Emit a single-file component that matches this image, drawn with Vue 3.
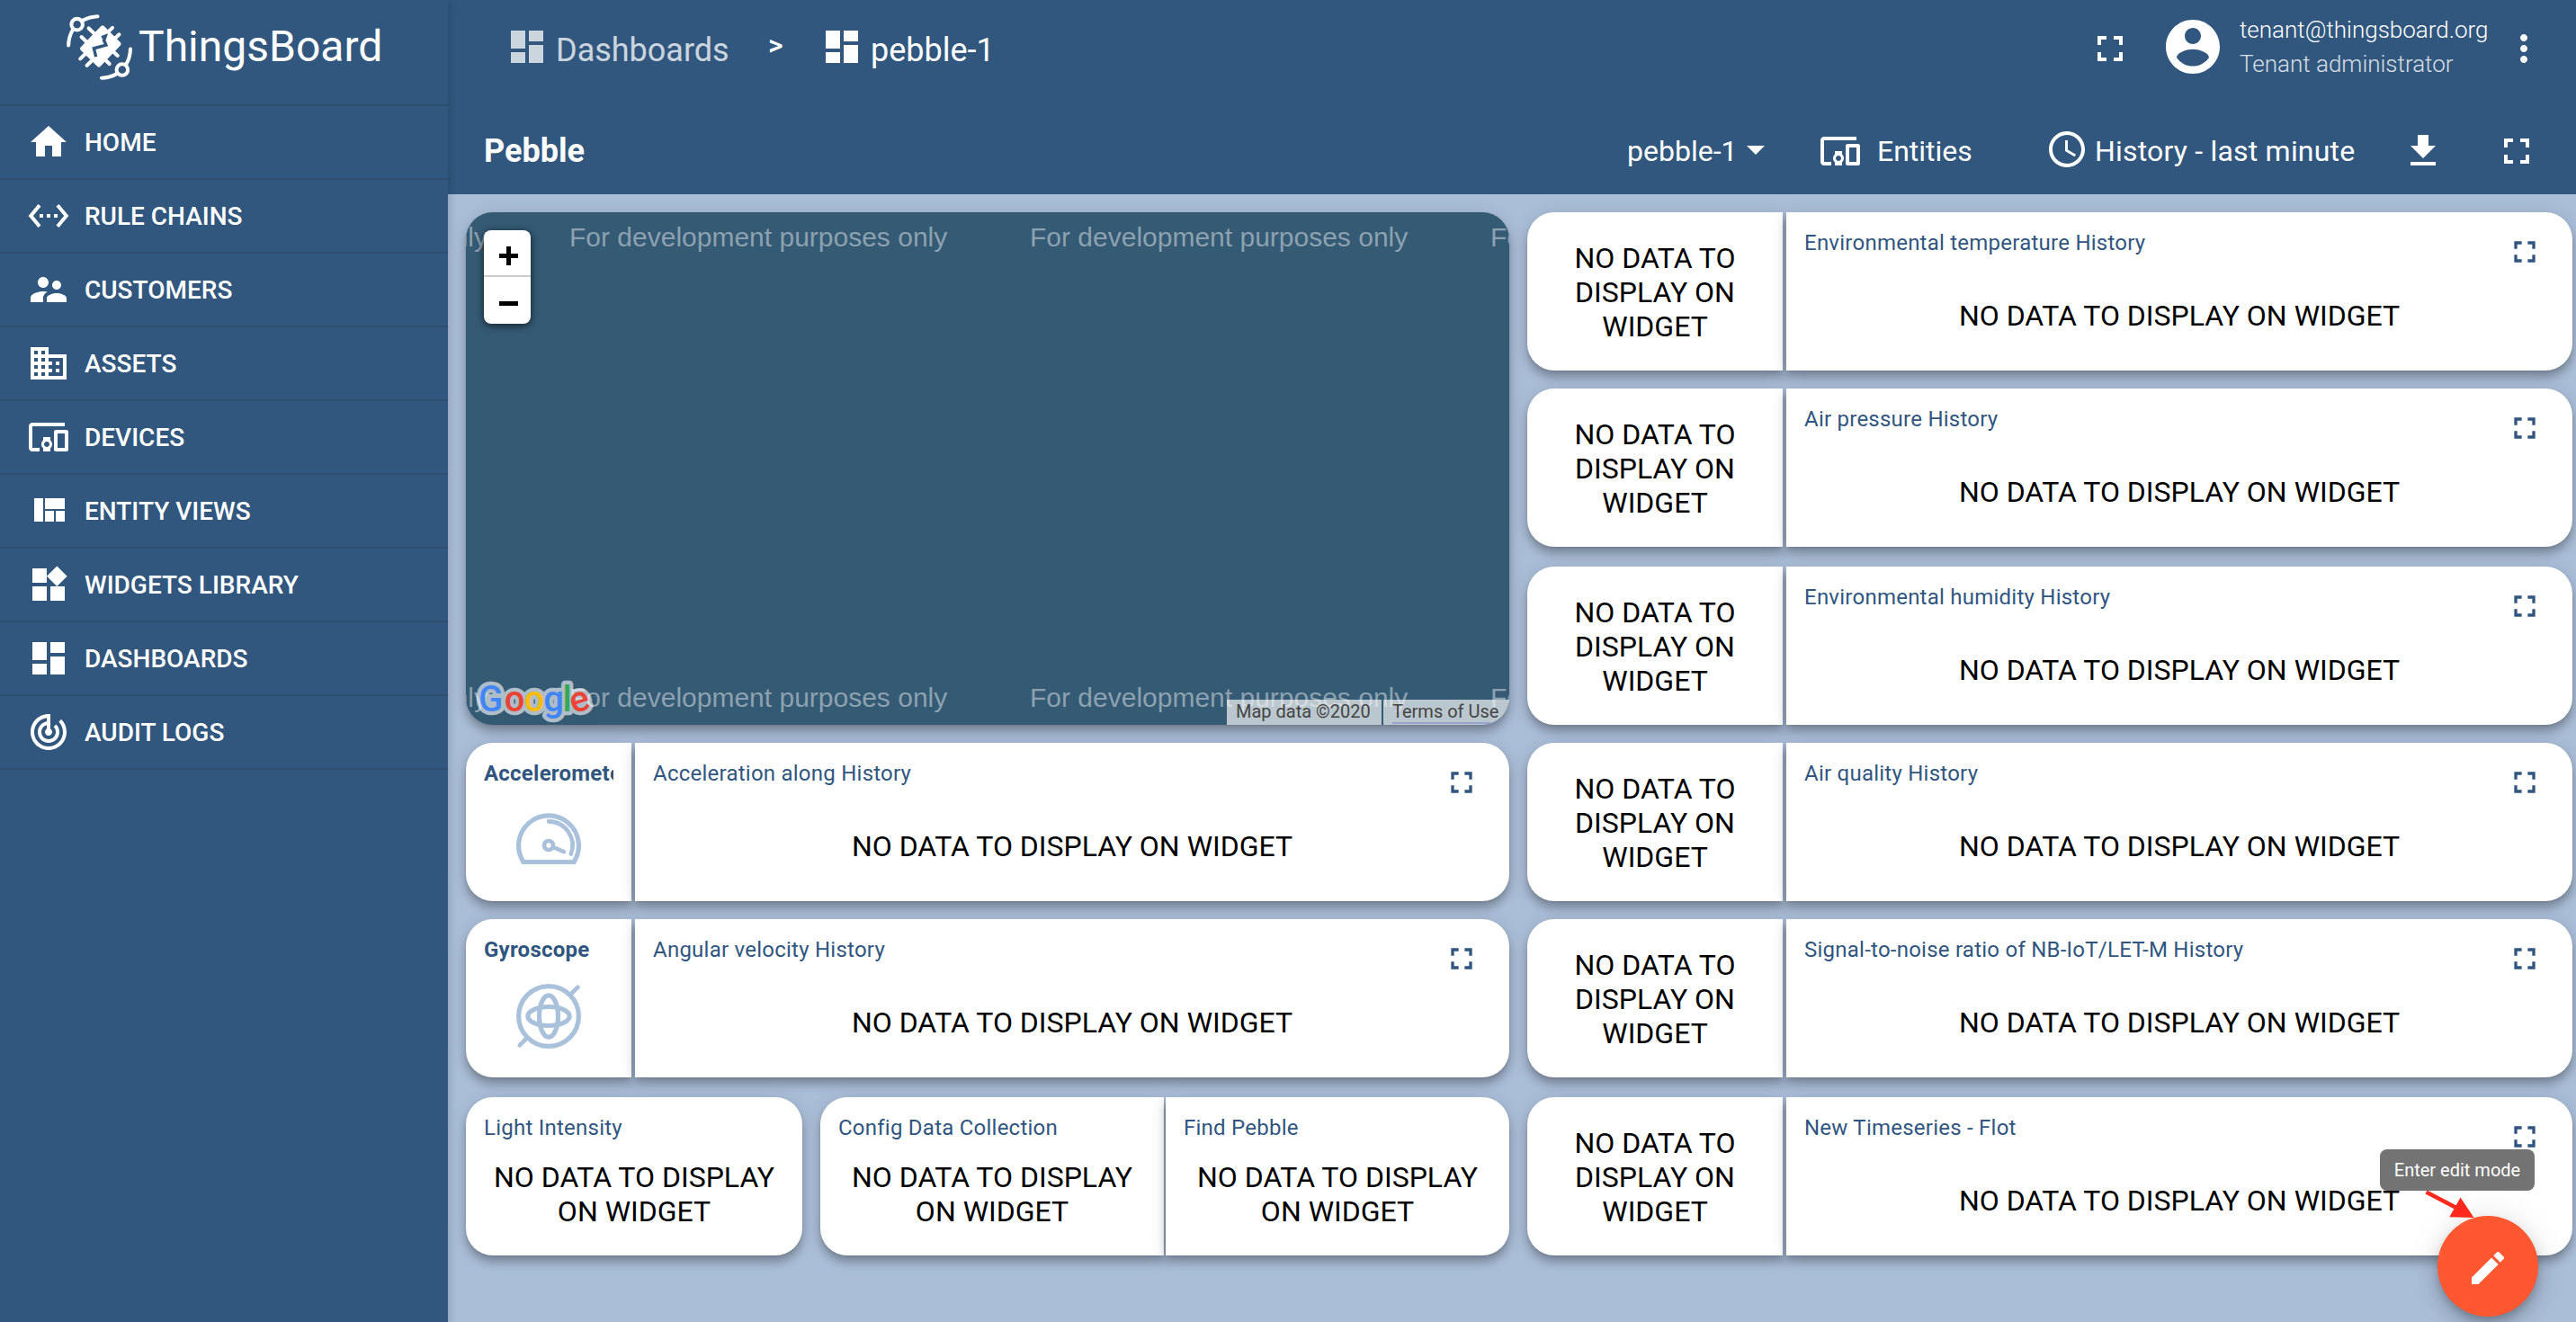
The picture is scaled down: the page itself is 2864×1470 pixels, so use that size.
<script setup>
const icons = {
  home: 'M10 20v-6h4v6h5v-8h3L12 3 2 12h3v8z',
  rules: 'M7.77 6.76L6.23 5.48.82 12l5.41 6.52 1.54-1.28L3.42 12l4.35-5.24zM7 13h2v-2H7v2zm10-2h-2v2h2v-2zm-6 2h2v-2h-2v2zm6.77-7.52l-1.54 1.28L20.58 12l-4.35 5.24 1.54 1.28L23.18 12l-5.41-6.52z',
  customers: 'M16.5 12c1.38 0 2.49-1.12 2.49-2.5S17.88 7 16.5 7C15.12 7 14 8.12 14 9.5s1.12 2.5 2.5 2.5zM9 11c1.66 0 2.99-1.34 2.99-3S10.66 5 9 5C7.34 5 6 6.34 6 8s1.34 3 3 3zm7.5 3c-1.83 0-5.5.92-5.5 2.75V19h11v-2.25c0-1.83-3.67-2.75-5.5-2.75zM9 13c-2.33 0-7 1.17-7 3.5V19h7v-2.25c0-.85.33-2.34 2.37-3.47C10.5 13.1 9.66 13 9 13z',
  assets: 'M12 7V3H2v18h20V7H12zM6 19H4v-2h2v2zm0-4H4v-2h2v2zm0-4H4V9h2v2zm0-4H4V5h2v2zm4 12H8v-2h2v2zm0-4H8v-2h2v2zm0-4H8V9h2v2zm0-4H8V5h2v2zm10 12h-8v-2h2v-2h-2v-2h2v-2h-2V9h8v10zm-2-8h-2v2h2v-2zm0 4h-2v2h2v-2z',
  devices: 'M3 6h18V4H3c-1.1 0-2 .9-2 2v12c0 1.1.9 2 2 2h4v-2H3V6zm10 6H9v1.78c-.61.55-1 1.33-1 2.22s.39 1.67 1 2.22V20h4v-1.78c.61-.55 1-1.34 1-2.22s-.39-1.67-1-2.22V12zm-2 5.5c-.83 0-1.5-.67-1.5-1.5s.67-1.5 1.5-1.5 1.5.67 1.5 1.5-.67 1.5-1.5 1.5zM22 8h-6c-.5 0-1 .5-1 1v10c0 .5.5 1 1 1h6c.5 0 1-.5 1-1V9c0-.5-.5-1-1-1zm-1 10h-4v-8h4v8z',
  views: 'M10 18h5v-6h-5v6zm-6 0h5V5H4v13zm12 0h5v-6h-5v6zM10 5v6h11V5H10z',
  widgets: 'M13 13v8h8v-8h-8zM3 21h8v-8H3v8zM3 3v8h8V3H3zm13.66-1.31L11 7.34 16.66 13l5.66-5.66-5.66-5.65z',
  dashboards: 'M3 13h8V3H3v10zm0 8h8v-6H3v6zm10 0h8V11h-8v10zm0-18v6h8V3h-8z',
  audit: 'M19.07 4.93l-1.41 1.41C19.1 7.79 20 9.79 20 12c0 4.42-3.58 8-8 8s-8-3.58-8-8c0-4.08 3.05-7.44 7-7.93v2.02C8.16 6.57 6 9.03 6 12c0 3.31 2.69 6 6 6s6-2.69 6-6c0-1.66-.67-3.16-1.76-4.24l-1.41 1.41C15.55 9.9 16 10.9 16 12c0 2.21-1.79 4-4 4s-4-1.79-4-4c0-1.86 1.28-3.41 3-3.86v2.14c-.6.35-1 .98-1 1.72 0 1.1.9 2 2 2s2-.9 2-2c0-.74-.4-1.38-1-1.72V2h-1C6.48 2 2 6.48 2 12s4.48 10 10 10 10-4.48 10-10c0-2.76-1.12-5.26-2.93-7.07z',
  fullscreen: 'M7 14H5v5h5v-2H7v-3zm-2-4h2V7h3V5H5v5zm12 7h-3v2h5v-5h-2v3zM14 5v2h3v3h2V5h-5z',
  account: 'M12 2C6.48 2 2 6.48 2 12s4.48 10 10 10 10-4.48 10-10S17.52 2 12 2zm0 3c1.66 0 3 1.34 3 3s-1.34 3-3 3-3-1.34-3-3 1.34-3 3-3zm0 14.2c-2.5 0-4.71-1.28-6-3.22.03-1.99 4-3.08 6-3.08 1.99 0 5.97 1.09 6 3.08-1.29 1.94-3.5 3.22-6 3.22z',
  more: 'M12 8c1.1 0 2-.9 2-2s-.9-2-2-2-2 .9-2 2 .9 2 2 2zm0 2c-1.1 0-2 .9-2 2s.9 2 2 2 2-.9 2-2-.9-2-2-2zm0 6c-1.1 0-2 .9-2 2s.9 2 2 2 2-.9 2-2-.9-2-2-2z',
  clock: 'M11.99 2C6.47 2 2 6.48 2 12s4.47 10 9.99 10C17.52 22 22 17.52 22 12S17.52 2 11.99 2zM12 20c-4.42 0-8-3.58-8-8s3.58-8 8-8 8 3.58 8 8-3.58 8-8 8zm.5-13H11v6l5.25 3.15.75-1.23-4.5-2.67z',
  download: 'M19 9h-4V3H9v6H5l7 7 7-7zM5 18v2h14v-2H5z',
  edit: 'M3 17.25V21h3.75L17.81 9.94l-3.75-3.75L3 17.25zM20.71 7.04c.39-.39.39-1.02 0-1.41l-2.34-2.34c-.39-.39-1.02-.39-1.41 0l-1.83 1.83 3.75 3.75 1.83-1.83z',
}

const nav = [
  ['home', 'HOME'],
  ['rules', 'RULE CHAINS'],
  ['customers', 'CUSTOMERS'],
  ['assets', 'ASSETS'],
  ['devices', 'DEVICES'],
  ['views', 'ENTITY VIEWS'],
  ['widgets', 'WIDGETS LIBRARY'],
  ['dashboards', 'DASHBOARDS'],
  ['audit', 'AUDIT LOGS'],
]

const history = [
  'Environmental temperature History',
  'Air pressure History',
  'Environmental humidity History',
  'Air quality History',
  'Signal-to-noise ratio of NB-IoT/LET-M History',
  'New Timeseries - Flot',
]

const google = [
  ['G', 20.5, '#4285f4', 0],
  ['o', 47, '#ea4335', 0],
  ['o', 69, '#fbbc05', 0],
  ['g', 90.5, '#4285f4', 0],
  ['l', 105.5, '#34a853', 0],
  ['e', 119.5, '#ea4335', -18],
]

const noData = 'NO DATA TO DISPLAY ON WIDGET'
</script>

<template>
  <div class="app">
    <aside class="sidebar">
      <div class="brand">
        <svg class="emblem" viewBox="0 0 72 72" fill="none" stroke="#fff" stroke-linecap="round">
          <g stroke-width="4">
            <circle cx="11.5" cy="11" r="6.2" />
            <circle cx="61" cy="60.7" r="6.2" />
            <path d="M34 2.2Q25.5 2.6 18 6.5M6.8 17Q2.3 24.500 2.100 34M38.500 69.700Q47 69.500 54.500 65.500M70 38Q69.800 47 65.500 54.500" />
            <path d="M24.300 15.300L56 45.300M16.300 24.700L47 54.300M50.300 14.700L15 48.700M57.700 22L22.300 56" />
          </g>
          <path d="M39.500 14.500L57.500 32.500L35.500 55.500L17 37.500Z" fill="#fff" stroke-width="4.500" stroke-linejoin="round" />
          <path d="M38.500 25.200L42.700 23.800L41 28.500L43.300 33.600L30 37.300L32.200 46.500" stroke="#31577e" stroke-width="3.400" stroke-linecap="butt" />
        </svg>
        <span class="brand-name">ThingsBoard</span>
      </div>
      <nav>
        <a v-for="[icon, label] in nav" :key="label" class="nav-item">
          <svg class="icon" viewBox="0 0 24 24"><path :d="icons[icon]" /></svg>
          <span>{{ label }}</span>
        </a>
      </nav>
    </aside>

    <main class="main">
      <header class="topbar">
        <div class="crumbs">
          <svg class="icon dim" viewBox="0 0 24 24"><path :d="icons.dashboards" /></svg>
          <span class="crumb dim first">Dashboards</span>
          <span class="sep">&gt;</span>
          <svg class="icon" viewBox="0 0 24 24"><path :d="icons.dashboards" /></svg>
          <span class="crumb">pebble-1</span>
        </div>
        <div class="user">
          <svg class="icon" viewBox="0 0 24 24"><path :d="icons.fullscreen" /></svg>
          <svg class="avatar" viewBox="0 0 24 24"><path :d="icons.account" /></svg>
          <div class="user-info">
            <span>tenant@thingsboard.org</span>
            <span class="role">Tenant administrator</span>
          </div>
          <svg class="icon" viewBox="0 0 24 24"><path :d="icons.more" /></svg>
        </div>
      </header>

      <div class="toolbar">
        <h1>Pebble</h1>
        <div class="tools">
          <span class="state">pebble-1</span>
          <i class="caret"></i>
          <svg class="icon entities" viewBox="0 0 24 24"><path :d="icons.devices" /></svg>
          <span class="entities-label">Entities</span>
          <svg class="icon clock" viewBox="0 0 24 24"><path :d="icons.clock" /></svg>
          <span class="window">History - last minute</span>
          <svg class="icon download" viewBox="0 0 24 24"><path :d="icons.download" /></svg>
          <svg class="icon" viewBox="0 0 24 24"><path :d="icons.fullscreen" /></svg>
        </div>
      </div>

      <section class="dashboard">
        <div class="col left">
          <div class="card map">
            <span class="mark m1">only</span>
            <span class="mark m2">For development purposes only</span>
            <span class="mark m3">For development purposes only</span>
            <span class="mark m4">For development purposes only</span>
            <span class="mark low m1">only</span>
            <span class="mark low m2">For development purposes only</span>
            <span class="mark low m3">For development purposes only</span>
            <span class="mark low m4">For development purposes only</span>
            <div class="zoom">
              <div class="zoom-btn"><i class="bar"></i><i class="bar up"></i></div>
              <div class="zoom-btn"><i class="bar"></i></div>
            </div>
            <svg class="google" viewBox="0 0 140 60" text-anchor="middle">
              <g opacity="0.6" fill="#fff" stroke="#fff" stroke-width="8.500" stroke-linejoin="round">
                <text v-for="([c, x, , r], i) in google" :key="i" :x="x" y="40" :transform="`rotate(${r} ${x} 30)`">{{ c }}</text>
              </g>
              <text v-for="([c, x, f, r], i) in google" :key="i" :x="x" y="40" :fill="f" :transform="`rotate(${r} ${x} 30)`">{{ c }}</text>
            </svg>
            <div class="credits">
              <span class="credit">Map data ©2020</span>
              <span class="credit"><u>Terms of Use</u></span>
            </div>
          </div>

          <div class="row">
            <div class="card round-l sensor">
              <div class="title bold">Accelerometer</div>
              <svg class="glyph" viewBox="0 0 72 72">
                <path d="M8 60.500A33.400 33.400 0 1 1 64 60.500Z" />
                <path d="M36 15.400A26.600 26.600 0 0 1 60.800 51.500" stroke-width="4.600" />
                <circle cx="36" cy="42" r="5" stroke-width="4.700" />
                <path d="M41 44L53 49.200" stroke-width="4.600" />
              </svg>
            </div>
            <div class="card round-r grow timeseries">
              <div class="title">Acceleration along History</div>
              <div class="empty">{{ noData }}</div>
              <svg class="expand" viewBox="0 0 24 24"><path :d="icons.fullscreen" /></svg>
            </div>
          </div>

          <div class="row">
            <div class="card round-l sensor">
              <div class="title bold">Gyroscope</div>
              <svg class="glyph" viewBox="0 0 72 72">
                <circle cx="36" cy="36" r="33.400" />
                <ellipse cx="36" cy="36" rx="23.200" ry="10.500" />
                <ellipse cx="36" cy="36" rx="10.500" ry="23.200" />
                <path d="M60.500 11.500L68.500 3.700M11.500 60.500L3.700 68.300" stroke-width="4.600" />
              </svg>
            </div>
            <div class="card round-r grow timeseries">
              <div class="title">Angular velocity History</div>
              <div class="empty">{{ noData }}</div>
              <svg class="expand" viewBox="0 0 24 24"><path :d="icons.fullscreen" /></svg>
            </div>
          </div>

          <div class="row last">
            <div class="card light">
              <div class="title">Light Intensity</div>
              <div class="empty">{{ noData }}</div>
            </div>
            <div class="card round-l grow">
              <div class="title">Config Data Collection</div>
              <div class="empty">{{ noData }}</div>
            </div>
            <div class="card round-r grow find">
              <div class="title">Find Pebble</div>
              <div class="empty">{{ noData }}</div>
            </div>
          </div>
        </div>

        <div class="col right">
          <div v-for="name in history" :key="name" class="row">
            <div class="card round-l value">
              <div class="empty">{{ noData }}</div>
            </div>
            <div class="card round-r grow timeseries">
              <div class="title">{{ name }}</div>
              <div class="empty">{{ noData }}</div>
              <svg class="expand" viewBox="0 0 24 24"><path :d="icons.fullscreen" /></svg>
            </div>
          </div>
        </div>
      </section>
    </main>

    <div class="tooltip">Enter edit mode</div>
    <button class="fab">
      <svg class="icon" viewBox="0 0 24 24"><path :d="icons.edit" /></svg>
    </button>
    <svg class="pointer" viewBox="0 0 60 36">
      <path d="M1.500 2.500L34 19.500" stroke="#fd2a1b" stroke-width="4.600" />
      <path d="M39.500 8.500L27.300 30.200L54.500 31Z" fill="#fd2a1b" />
    </svg>
  </div>
</template>

<style>
body {
  margin: 0;
  overflow: hidden;
}
</style>

<style scoped>
.app {
  position: relative;
  display: flex;
  width: 2864px;
  height: 1470px;
  overflow: hidden;
  font-family: Roboto, "Liberation Sans", sans-serif;
  color: #fff;
  background: #abbed8;
}
.icon {
  width: 48px;
  height: 48px;
  flex: none;
  fill: currentColor;
}

/* Sidebar */
.sidebar {
  position: relative;
  z-index: 1;
  flex: none;
  width: 498px;
  background: #31577e;
  box-shadow: 0 4px 10px rgba(0, 0, 0, 0.22);
}
.brand {
  display: flex;
  box-sizing: border-box;
  height: 118px;
  padding: 16px 0 0 74px;
  border-bottom: 2px solid #2c4e71;
}
.emblem {
  width: 73px;
  height: 73px;
}
.brand-name {
  margin: 8px 0 0 7px;
  font-size: 48px;
  line-height: 56px;
}
.nav-item {
  display: flex;
  align-items: center;
  box-sizing: border-box;
  height: 82px;
  padding-left: 30px;
  gap: 16px;
  border-bottom: 2px solid #2c4e71;
  font-size: 28px;
  font-weight: 500;
}

/* Header */
.main {
  flex: 1;
  display: flex;
  flex-direction: column;
}
.topbar {
  display: flex;
  justify-content: space-between;
  align-items: flex-start;
  height: 120px;
  background: #31577e;
}
.crumbs {
  display: flex;
  padding: 28px 0 0 64px;
}
.crumb {
  margin: 7px 0 0 8px;
  font-size: 36px;
  line-height: 43px;
}
.first {
  width: 195px;
}
.dim {
  opacity: 0.75;
}
.sep {
  width: 58px;
  margin: 3px 0 0 41px;
  font-size: 32px;
  line-height: 38px;
  font-weight: 500;
}
.user {
  display: flex;
  align-items: center;
  padding: 16px 34px 0 0;
}
.user > .icon {
  margin-top: 4px;
}
.avatar {
  width: 72px;
  height: 72px;
  margin: 0 16px 0 32px;
  fill: #fff;
}
.user-info {
  display: flex;
  flex-direction: column;
  width: 292px;
  margin: -2px 0;
  font-size: 26px;
  font-weight: 300;
  line-height: 38px;
}
.role {
  opacity: 0.8;
}
.toolbar {
  display: flex;
  justify-content: space-between;
  align-items: center;
  height: 96px;
  padding: 0 42px 0 40px;
  background: #31577e;
  font-size: 32px;
}
h1 {
  margin: 0;
  font-size: 36px;
  font-weight: 700;
}
.tools {
  display: flex;
  align-items: center;
  white-space: nowrap;
}
.caret {
  margin: -2px 60px 0 12px;
  border: 10px solid transparent;
  border-top-color: #fff;
  border-bottom: 0;
}
.entities-label {
  width: 176px;
  margin: 0 0 0 17px;
}
.clock {
  margin: -4px 7px 0 11px;
}
.window {
  width: 341px;
  letter-spacing: 0.2px;
}
.download {
  margin-right: 56px;
}
.state {
  width: 121px;
}

/* Dashboard */
.dashboard {
  flex: 1;
  display: flex;
  gap: 20px;
  padding: 20px 4px 0 20px;
}
.col {
  display: flex;
  flex-direction: column;
  gap: 20px;
}
.left {
  width: 1160px;
}
.right {
  flex: 1;
}
.row {
  display: flex;
  height: 176px;
  gap: 4px;
}
.last {
  margin-top: 2px;
  gap: 20px;
}
.right .row:nth-child(3),
.right .row:nth-child(6) {
  margin-top: 2px;
}
.card {
  position: relative;
  display: flex;
  flex-direction: column;
  box-sizing: border-box;
  border-radius: 30px;
  background: #fff;
  color: #000;
  box-shadow: 0 2px 4px -2px rgba(0, 0, 0, 0.2), 0 8px 10px rgba(0, 0, 0, 0.22), 0 2px 20px rgba(0, 0, 0, 0.12);
}
.round-l {
  border-radius: 30px 0 0 30px;
}
.round-r {
  border-radius: 0 30px 30px 0;
}
.grow {
  flex: 1 1 0;
  min-width: 0;
}
.sensor {
  width: 184px;
  align-items: stretch;
}
.light {
  width: 374px;
}
.value {
  width: 284px;
  padding-top: 2px;
}
.find {
  margin-left: -18px;
}
.title {
  box-sizing: border-box;
  height: 40px;
  padding-top: 20px;
  margin: 0 20px;
  color: #305680;
  font-size: 24px;
  line-height: 28px;
  letter-spacing: 0.24px;
  white-space: nowrap;
}
.timeseries .title {
  height: 54px;
}
.bold {
  height: 54px;
  font-weight: 700;
  overflow: hidden;
}
.empty {
  flex: 1;
  display: flex;
  align-items: center;
  justify-content: center;
  padding: 0 20px;
  font-size: 32px;
  line-height: 38px;
  text-align: center;
}
.expand {
  position: absolute;
  top: 24px;
  right: 33px;
  width: 40px;
  height: 40px;
  fill: #305680;
}
.glyph {
  width: 72px;
  height: 72px;
  margin: 18px auto 0;
  fill: none;
  stroke: #a9c1da;
  stroke-width: 5.2;
  stroke-linecap: round;
}

/* Map */
.map {
  height: 570px;
  background: #355a74;
  overflow: hidden;
}
.mark {
  position: absolute;
  top: 11px;
  color: rgba(255, 255, 255, 0.44);
  font-family: "Liberation Sans", Arial, sans-serif;
  font-size: 30px;
  line-height: 34px;
  white-space: nowrap;
}
.low {
  top: 523px;
}
.m1 {
  left: -31px;
}
.m2 {
  left: 115px;
}
.m3 {
  left: 627px;
}
.m4 {
  left: 1139px;
}
.zoom {
  position: absolute;
  left: 20px;
  top: 20px;
  width: 52px;
  border-radius: 8px;
  background: #fff;
  box-shadow: 0 2px 10px rgba(0, 0, 0, 0.65);
}
.zoom-btn {
  position: relative;
  display: flex;
  align-items: center;
  justify-content: center;
  height: 50px;
}
.zoom-btn + .zoom-btn {
  box-sizing: border-box;
  height: 54px;
  border-top: 2px solid #ccc;
}
.bar {
  width: 21px;
  height: 5px;
  margin: 6px 0 0 2px;
  background: #000;
}
.up {
  position: absolute;
  width: 5px;
  height: 21px;
}
.google {
  position: absolute;
  left: 7px;
  top: 515px;
  width: 140px;
  height: 60px;
  font-size: 40px;
  font-weight: 500;
}
.credits {
  position: absolute;
  right: 0;
  bottom: 0;
  display: flex;
  gap: 2px;
  color: #444;
  font-size: 20px;
  line-height: 26px;
}
.credit {
  box-sizing: border-box;
  height: 28px;
  width: 140px;
  padding-left: 10px;
  background: rgba(245, 245, 245, 0.7);
}
.credit:first-child {
  width: 172px;
}
.credit u {
  text-decoration-color: #98a6cf;
  text-underline-offset: 5px;
  text-decoration-thickness: 2px;
}

/* Floating controls */
.tooltip {
  position: absolute;
  left: 2646px;
  top: 1278px;
  z-index: 2;
  width: 172px;
  border-radius: 8px;
  background: #737373;
  font-size: 20px;
  line-height: 46px;
  text-align: center;
}
.fab {
  position: absolute;
  left: 2710px;
  top: 1352px;
  z-index: 2;
  display: flex;
  align-items: center;
  justify-content: center;
  width: 112px;
  height: 112px;
  padding: 4px 0 0;
  border: 0;
  border-radius: 50%;
  background: #ff5830;
  color: #fff;
  box-shadow: 0 6px 10px -2px rgba(0, 0, 0, 0.2), 0 12px 20px rgba(0, 0, 0, 0.14), 0 2px 36px rgba(0, 0, 0, 0.12);
}
.pointer {
  position: absolute;
  left: 2696px;
  top: 1323px;
  z-index: 3;
  width: 60px;
  height: 36px;
  fill: none;
}
</style>
